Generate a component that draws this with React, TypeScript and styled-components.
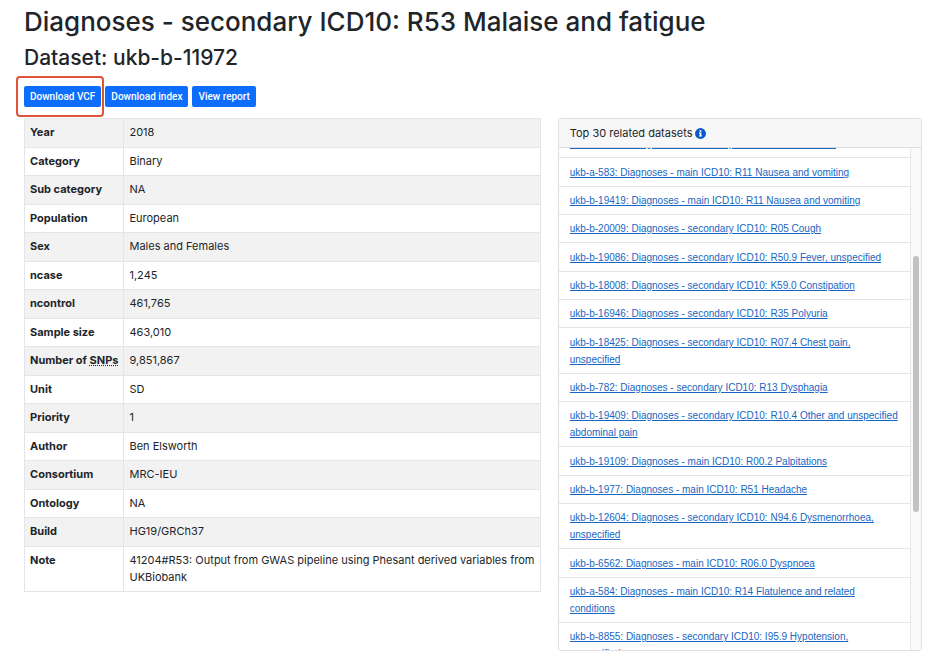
import { useLayoutEffect, useRef } from "react";
import styled, { createGlobalStyle } from "styled-components";

const GlobalStyle = createGlobalStyle`
  *, *::before, *::after { box-sizing: border-box; }
  body {
    margin: 0;
    background: #fff;
    color: #212529;
    font-family: Inter, "Liberation Sans", sans-serif;
    font-size: 11px;
    line-height: 17px;
  }
`;

const Page = styled.div`
  padding: 5px 6px 7px 15px;
`;

const Heading = styled.header`
  padding: 0 8px 0 9px;
`;

const Title = styled.h1`
  margin: 0 0 5px;
  font-size: 26px;
  line-height: 34px;
  font-weight: 500;
`;

const Subtitle = styled.h2`
  margin: 0 0 15px;
  font-size: 21px;
  line-height: 27px;
  font-weight: 500;
`;

const Actions = styled.div`
  display: flex;
  gap: 4px;
  margin-bottom: 11px;
`;

const Highlight = styled.span`
  position: relative;
  display: flex;

  &::after {
    content: "";
    position: absolute;
    inset: -10px -3px -10px -8px;
    border: 2px solid #e0523a;
    border-radius: 4px;
    pointer-events: none;
    z-index: 1;
  }
`;

const ActionButton = styled.button`
  height: 21px;
  padding: 0 6px;
  border: 0;
  border-radius: 2px;
  background: #0d6efd;
  color: #fff;
  font-family: Roboto, "Liberation Sans", sans-serif;
  font-size: 10px;
  font-weight: 500;
  white-space: nowrap;
  cursor: pointer;
`;

const Columns = styled.main`
  display: grid;
  grid-template-columns: minmax(0, 7fr) minmax(0, 5fr);
  align-items: start;
`;

const Column = styled.section`
  padding: 0 8px 0 9px;
`;

const InfoTable = styled.table`
  width: 100%;
  border-collapse: collapse;
  border: 1px solid #e3e5e8;
`;

const InfoRow = styled.tr`
  &:nth-child(odd) { background: #f2f2f2; }
  &:nth-child(odd) > * { padding-bottom: 6px; }
`;

const Label = styled.th`
  padding: 5px;
  border: 1px solid #e3e5e8;
  font-weight: 700;
  text-align: left;
  vertical-align: top;
  white-space: nowrap;
`;

const Value = styled.td`
  width: 100%;
  padding: 5px;
  border: 1px solid #e3e5e8;
  vertical-align: top;
`;

const Abbr = styled.abbr`
  text-decoration: underline dotted;
`;

const Card = styled.div`
  border: 1px solid #dfdfdf;
  border-radius: 3px;
  overflow: hidden;
`;

const CardHeader = styled.div`
  display: flex;
  align-items: center;
  gap: 3px;
  padding: 6px 11px 5px;
  border-bottom: 1px solid #dfdfdf;
  background: #f7f7f7;
`;

const InfoIcon = styled.svg`
  width: 11px;
  height: 11px;
`;

const ScrollArea = styled.div`
  display: flex;
  height: 502px;
`;

const List = styled.ul`
  flex: 1;
  min-width: 0;
  margin: 0;
  padding: 0;
  list-style: none;
  overflow-y: auto;
  scrollbar-width: none;
`;

const Item = styled.li`
  padding: 5px 11px;
  border-bottom: 1px solid #e4e4e4;
  font-family: "Liberation Sans", Arial, sans-serif;
  font-size: 10px;

  &:nth-child(3n + 2) { padding-top: 6px; }
`;

const Link = styled.a`
  color: #1766c2;
`;

const Track = styled.div`
  display: flex;
  width: 11px;
  padding-left: 2px;
  border-left: 1px solid #e8e8e8;
  background: #fafafa;
`;

const Thumb = styled.div`
  width: 6px;
  height: 51%;
  margin-top: 108px;
  border-radius: 3px;
  background: #c1c1c1;
`;

const details = [
  ["Year", "2018"],
  ["Category", "Binary"],
  ["Sub category", "NA"],
  ["Population", "European"],
  ["Sex", "Males and Females"],
  ["ncase", "1,245"],
  ["ncontrol", "461,765"],
  ["Sample size", "463,010"],
  ["Number of SNPs", "9,851,867"],
  ["Unit", "SD"],
  ["Priority", "1"],
  ["Author", "Ben Elsworth"],
  ["Consortium", "MRC-IEU"],
  ["Ontology", "NA"],
  ["Build", "HG19/GRCh37"],
  ["Note", "41204#R53: Output from GWAS pipeline using Phesant derived variables from UKBiobank"],
];

const related = [
  "ukb-b-10808: Diagnoses - secondary ICD10: R12 Heartburn",
  "ukb-a-583: Diagnoses - main ICD10: R11 Nausea and vomiting",
  "ukb-b-19419: Diagnoses - main ICD10: R11 Nausea and vomiting",
  "ukb-b-20009: Diagnoses - secondary ICD10: R05 Cough",
  "ukb-b-19086: Diagnoses - secondary ICD10: R50.9 Fever, unspecified",
  "ukb-b-18008: Diagnoses - secondary ICD10: K59.0 Constipation",
  "ukb-b-16946: Diagnoses - secondary ICD10: R35 Polyuria",
  "ukb-b-18425: Diagnoses - secondary ICD10: R07.4 Chest pain, unspecified",
  "ukb-b-782: Diagnoses - secondary ICD10: R13 Dysphagia",
  "ukb-b-19409: Diagnoses - secondary ICD10: R10.4 Other and unspecified abdominal pain",
  "ukb-b-19109: Diagnoses - main ICD10: R00.2 Palpitations",
  "ukb-b-1977: Diagnoses - main ICD10: R51 Headache",
  "ukb-b-12604: Diagnoses - secondary ICD10: N94.6 Dysmenorrhoea, unspecified",
  "ukb-b-6562: Diagnoses - main ICD10: R06.0 Dyspnoea",
  "ukb-a-584: Diagnoses - main ICD10: R14 Flatulence and related conditions",
  "ukb-b-8855: Diagnoses - secondary ICD10: I95.9 Hypotension, unspecified",
];

export default function App() {
  const list = useRef<HTMLUListElement>(null);

  useLayoutEffect(() => {
    if (list.current) list.current.scrollTop = 18;
  }, []);

  return (
    <>
      <GlobalStyle />
      <Page>
        <Heading>
          <Title>Diagnoses - secondary ICD10: R53 Malaise and fatigue</Title>
          <Subtitle>Dataset: ukb-b-11972</Subtitle>
          <Actions>
            <Highlight>
              <ActionButton type="button">Download VCF</ActionButton>
            </Highlight>
            <ActionButton type="button">Download index</ActionButton>
            <ActionButton type="button">View report</ActionButton>
          </Actions>
        </Heading>
        <Columns>
          <Column>
            <InfoTable>
              <tbody>
                {details.map(([label, value]) => (
                  <InfoRow key={label}>
                    <Label scope="row">
                      {label === "Number of SNPs" ? (
                        <>Number of <Abbr title="Single nucleotide polymorphisms">SNPs</Abbr></>
                      ) : label}
                    </Label>
                    <Value>{value}</Value>
                  </InfoRow>
                ))}
              </tbody>
            </InfoTable>
          </Column>
          <Column>
            <Card>
              <CardHeader>
                <span>Top 30 related datasets</span>
                <InfoIcon viewBox="0 0 512 512" aria-hidden="true">
                  <circle cx="256" cy="256" r="254" fill="#0a58ca" />
                  <circle cx="256" cy="136" r="48" fill="#fff" />
                  <path fill="#fff" d="M188 212h110v136h30v52H188v-52h32v-84h-32z" />
                </InfoIcon>
              </CardHeader>
              <ScrollArea>
                <List ref={list}>
                  {related.map((name) => (
                    <Item key={name}><Link href="#">{name}</Link></Item>
                  ))}
                </List>
                <Track aria-hidden="true"><Thumb /></Track>
              </ScrollArea>
            </Card>
          </Column>
        </Columns>
      </Page>
    </>
  );
}
